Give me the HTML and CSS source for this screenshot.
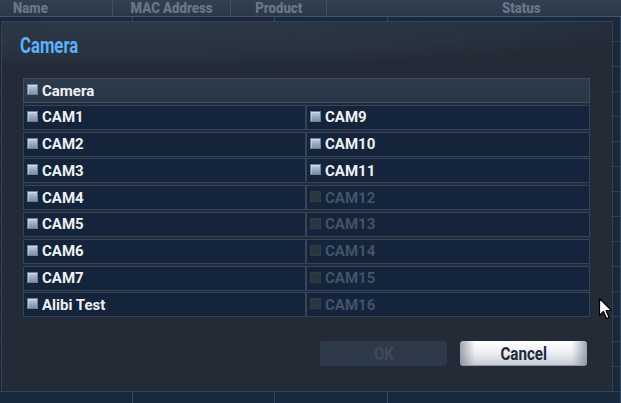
FILE: index.html
```html
<!DOCTYPE html>
<html lang="en">
<head>
    <meta charset="UTF-8">
    <title>Camera</title>
    <link rel="stylesheet" href="styles.css">
</head>
<body>
<div class="page">
    <div class="thead">
        <span class="th th-name"><b>Name</b></span>
        <span class="th th-mac"><b>MAC Address</b></span>
        <span class="th th-product"><b>Product</b></span>
        <span class="th th-status"><b>Status</b></span>
    </div>
    <div class="tbody">
        <div class="trow"><i></i><i></i><i></i><i></i></div>
        <div class="trow"><i></i><i></i><i></i><i></i></div>
        <div class="trow"><i></i><i></i><i></i><i></i></div>
        <div class="trow"><i></i><i></i><i></i><i></i></div>
        <div class="trow"><i></i><i></i><i></i><i></i></div>
        <div class="trow"><i></i><i></i><i></i><i></i></div>
        <div class="trow"><i></i><i></i><i></i><i></i></div>
        <div class="trow"><i></i><i></i><i></i><i></i></div>
        <div class="trow"><i></i><i></i><i></i><i></i></div>
        <div class="trow"><i></i><i></i><i></i><i></i></div>
        <div class="trow"><i></i><i></i><i></i><i></i></div>
        <div class="trow"><i></i><i></i><i></i><i></i></div>
        <div class="trow"><i></i><i></i><i></i><i></i></div>
        <div class="trow"><i></i><i></i><i></i><i></i></div>
        <div class="trow"><i></i><i></i><i></i><i></i></div>
        <div class="trow"><i></i><i></i><i></i><i></i></div>
    </div>

    <!-- modal dialog -->
    <div class="dialog">
        <div class="title"><span>Camera</span></div>
        <div class="grid">
            <div class="cell head"><span class="chk"></span>Camera</div>
            <div class="cell"><span class="chk"></span>CAM1</div>
            <div class="cell"><span class="chk"></span>CAM9</div>
            <div class="cell"><span class="chk"></span>CAM2</div>
            <div class="cell"><span class="chk"></span>CAM10</div>
            <div class="cell"><span class="chk"></span>CAM3</div>
            <div class="cell"><span class="chk"></span>CAM11</div>
            <div class="cell"><span class="chk"></span>CAM4</div>
            <div class="cell off"><span class="chk"></span>CAM12</div>
            <div class="cell"><span class="chk"></span>CAM5</div>
            <div class="cell off"><span class="chk"></span>CAM13</div>
            <div class="cell"><span class="chk"></span>CAM6</div>
            <div class="cell off"><span class="chk"></span>CAM14</div>
            <div class="cell"><span class="chk"></span>CAM7</div>
            <div class="cell off"><span class="chk"></span>CAM15</div>
            <div class="cell"><span class="chk"></span>Alibi Test</div>
            <div class="cell off"><span class="chk"></span>CAM16</div>
        </div>
        <div class="buttons">
            <button class="btn btn-ok" disabled><span>OK</span></button>
            <button class="btn btn-cancel"><span>Cancel</span></button>
        </div>
    </div>

    <svg class="cursor" width="16" height="24" viewBox="0 0 16 24">
        <path d="M1.5 1.5 L1.5 18.5 L5.5 14.5 L8.5 21.5 L11 20.5 L8 13.5 L13.5 13.5 Z" fill="#fff" stroke="#000" stroke-width="1.2" stroke-linejoin="round"/>
    </svg>
</div>
</body>
</html>
```

FILE: styles.css
```css
* {
    padding: 0;
    margin: 0;
    box-sizing: border-box;
}

body {
    background: #17263a;
    font-family: Roboto, "Liberation Sans", sans-serif;
    overflow: hidden;
}

.page {
    width: 621px;
    height: 403px;
    position: relative;
    overflow: hidden;
}

/* table behind the dialog */
.thead {
    height: 17px;
    display: grid;
    grid-template-columns: 113px 118px 96px 1fr;
    background: linear-gradient(#324152, #2a3848);
    border-bottom: 1px solid #465568;
}

.th {
    display: block;
    height: 16px;
    padding-top: 1px;
    font-weight: bold;
    font-size: 15px;
    line-height: 15px;
    color: #67778a;
    border-right: 1px solid #3f4e61;
    white-space: nowrap;
}

.th b {
    display: inline-block;
    transform: scaleX(0.88);
}

.th-name {
    padding-left: 13px;
}

.th-name b {
    transform-origin: left center;
}

.th-mac,
.th-product {
    text-align: center;
}

.th-status {
    border-right: 0;
    padding-left: 175px;
}

.th-status b {
    transform-origin: left center;
}

.trow {
    height: 25px;
    display: grid;
    grid-template-columns: 133px 142px 113px 1fr;
    border-bottom: 1px solid #2f4157;
    background: #18293d;
}

.trow i {
    border-right: 1px solid #34475d;
}

/* dialog */
.dialog {
    position: absolute;
    left: 1px;
    top: 21px;
    width: 612px;
    height: 371px;
    border: 1px solid #364251;
    background:
        radial-gradient(ellipse 560px 46px at 20% 0, rgba(60, 74, 90, 0.45) 0, rgba(60, 74, 90, 0.25) 70%, rgba(60, 74, 90, 0) 100%),
        #222b36;
}

.title {
    margin: 12px 0 0 18px;
    font-weight: bold;
    font-size: 22px;
    line-height: 24px;
    color: #5cb0ff;
}

.title span {
    display: inline-block;
    transform: scaleX(0.76);
    transform-origin: left center;
}

.grid {
    margin: 20px 0 0 21px;
    width: 567px;
    display: grid;
    grid-template-columns: 283px 284px;
    grid-auto-rows: 25px;
    row-gap: 1.8px;
}

.cell {
    display: flex;
    align-items: center;
    gap: 4px;
    padding-left: 3px;
    background: #14243a;
    border: 1px solid #35445a;
    font-weight: bold;
    font-size: 15px;
    color: #eef1f5;
}

.cell.head {
    grid-column: 1 / 3;
    background: linear-gradient(#2d3b4c, #283647);
    border-color: #3e4c5e;
}

.chk {
    width: 11px;
    height: 11px;
    margin-top: -2px;
    background: linear-gradient(#c2cfdf, #93a5bd 60%, #7f92ad);
    border: 1px solid #6e7f97;
    box-shadow: inset 1px 1px 0 rgba(255, 255, 255, 0.35);
}

.cell.off {
    color: #445365;
}

.cell.off .chk {
    background: #2c3641;
    border-color: #323c48;
    box-shadow: none;
}

.buttons {
    display: flex;
    justify-content: flex-end;
    gap: 13px;
    margin: 24px 25px 0 0;
}

.btn {
    width: 127px;
    height: 25px;
    border-radius: 3px;
    border: 0;
    font-family: Roboto, "Liberation Sans", sans-serif;
    font-weight: bold;
    font-size: 18px;
}

.btn span {
    display: inline-block;
    transform: scaleX(0.84);
}

.btn-ok {
    background: #2d3a49;
    color: #3d4a59;
}

.btn-cancel {
    background:
        linear-gradient(90deg, rgba(120, 128, 145, 0.7), rgba(255, 255, 255, 0) 12%, rgba(255, 255, 255, 0) 88%, rgba(120, 128, 145, 0.7)),
        linear-gradient(#ffffff, #eef0f4 45%, #c4c9d3);
    color: #1e2939;
    box-shadow: inset 0 -1px 0 #8d95a5;
}

.cursor {
    position: absolute;
    left: 598px;
    top: 297px;
}
```
